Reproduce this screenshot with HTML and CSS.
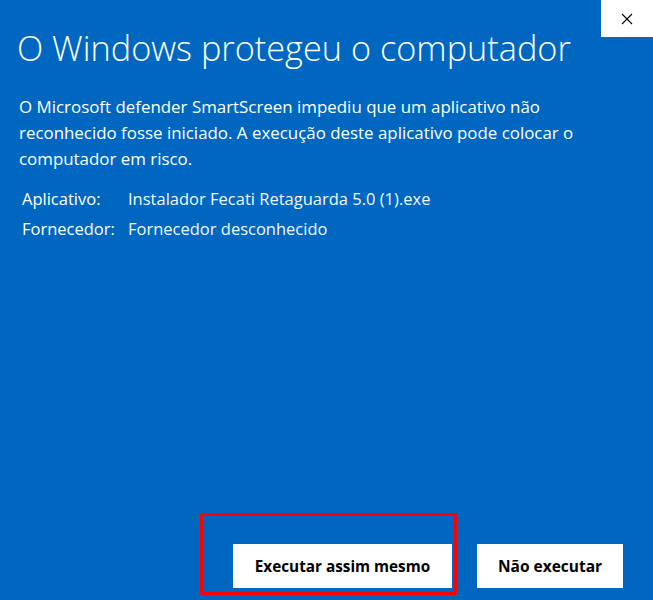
FILE: index.html
```html
<!DOCTYPE html>
<html lang="pt-BR">
<head>
    <meta charset="UTF-8">
    <meta name="viewport" content="width=device-width, initial-scale=1.0">
    <title>Windows SmartScreen</title>
    <link rel="stylesheet" href="styles.css">
</head>
<body>
    <div class="dialog">
        <div class="titlebar">
            <button class="close" aria-label="Fechar">
                <svg width="12" height="12" viewBox="0 0 12 12">
                    <path d="M1 1 L11 11 M11 1 L1 11" stroke="#000" stroke-width="1.1" fill="none"/>
                </svg>
            </button>
        </div>
        <h1 class="title">O Windows protegeu o computador</h1>
        <p class="message">O Microsoft defender SmartScreen impediu que um aplicativo não reconhecido fosse iniciado. A execução deste aplicativo pode colocar o computador em risco.</p>
        <div class="details">
            <div class="row">
                <span class="label">Aplicativo:</span>
                <span class="value">Instalador Fecati Retaguarda 5.0 (1).exe</span>
            </div>
            <div class="row">
                <span class="label">Fornecedor:</span>
                <span class="value">Fornecedor desconhecido</span>
            </div>
        </div>
        <div class="actions">
            <div class="highlight-wrap">
                <button class="btn">Executar assim mesmo</button>
                <div class="highlight"></div>
            </div>
            <button class="btn btn-cancel">Não executar</button>
        </div>
    </div>
</body>
</html>
```

FILE: styles.css
```css
body {
    margin: 0;
    padding: 0;
    font-family: "Open Sans", "Noto Sans", sans-serif;
}
.dialog {
    width: 653px;
    height: 600px;
    background-color: #0067c0;
    color: #fff;
    display: flex;
    flex-direction: column;
    box-sizing: border-box;
}
.titlebar {
    display: flex;
    justify-content: flex-end;
    height: 0;
}
.close {
    width: 52px;
    height: 37px;
    border: none;
    background-color: #fff;
    padding: 0;
    display: flex;
    align-items: center;
    justify-content: center;
}
.title {
    margin: 28px 0 0 17px;
    font-size: 34.3px;
    font-weight: 300;
    line-height: 40px;
}
.message {
    margin: 26px 0 0 19px;
    width: 600px;
    font-size: 16.9px;
    line-height: 26px;
}
.details {
    margin: 11px 0 0 22px;
    font-size: 16.5px;
}
.row {
    display: flex;
    height: 30px;
    align-items: center;
}
.label {
    width: 106px;
}
.value {
    color: #f2f7fc;
}
.actions {
    margin-top: auto;
    display: flex;
    justify-content: flex-end;
    gap: 25px;
    padding: 0 30px 12px 0;
}
.highlight-wrap {
    position: relative;
}
.btn {
    height: 44px;
    border: none;
    background-color: #fff;
    color: #000;
    font-family: "Open Sans", "Noto Sans", sans-serif;
    font-size: 15.3px;
    font-weight: 700;
    padding: 0;
}
.highlight-wrap .btn {
    width: 219px;
}
.btn-cancel {
    width: 146px;
    font-size: 15.5px;
}
.highlight {
    position: absolute;
    left: -33px;
    top: -31px;
    width: 251px;
    height: 76px;
    border: 3px solid #ff0000;
    border-radius: 2px;
}
```
